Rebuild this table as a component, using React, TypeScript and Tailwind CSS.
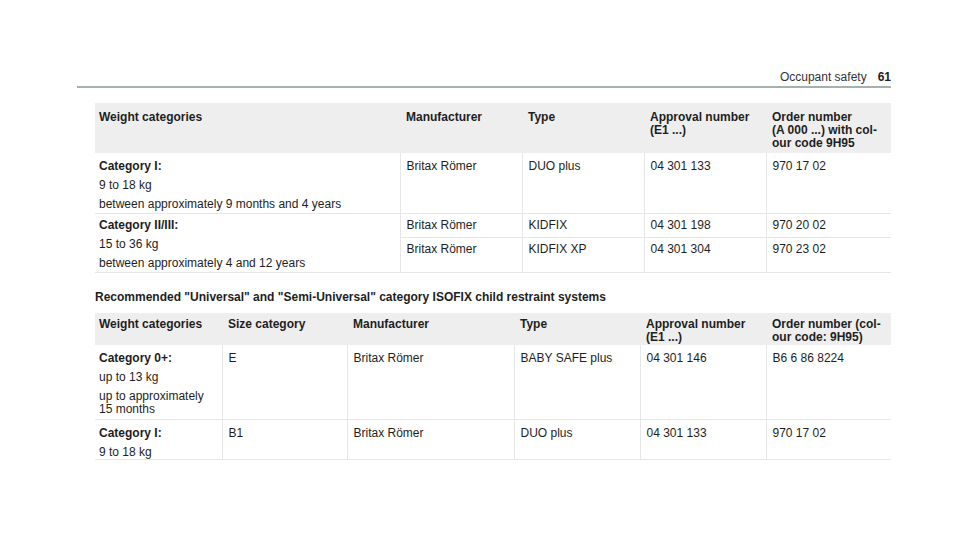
import React from "react";

const font = { fontFamily: '"Liberation Sans", Arial, sans-serif' };

const cell = "px-[6px] pt-[7px] align-top border-b border-l border-[#e6e6e6]";
const cellFirst = "px-[4px] pt-[7px] align-top border-b border-[#e6e6e6]";
const sub = "px-[6px] pt-[5px] align-top border-b border-l border-[#e6e6e6]";
const head = "px-[6px] text-left align-top font-bold";

function Lines({ items }: { items: React.ReactNode[] }) {
  return (
    <div className="flex flex-col gap-[6px]">
      {items.map((t, i) => (
        <div key={i}>{t}</div>
      ))}
    </div>
  );
}

export default function App() {
  return (
    <div className="w-[960px] h-[533px] bg-white text-[#1e1e1e]" style={font}>
      <div className="pl-[77px] pr-[69px] pt-[70px]">
        <div className="flex justify-end items-end gap-[11px] border-b-2 border-[#a3b2ad] pb-[2px] text-[12px] leading-[14px]">
          <span className="text-[#333]">Occupant safety</span>
          <span className="font-bold">61</span>
        </div>

        <div className="ml-[18px] mt-[15px] text-[12px] leading-[13px]">
          <table className="w-[796px] table-fixed border-collapse">
            <colgroup>
              <col className="w-[305px]" />
              <col className="w-[122px]" />
              <col className="w-[122px]" />
              <col className="w-[122px]" />
              <col className="w-[125px]" />
            </colgroup>
            <thead>
              <tr className="h-[50px] bg-[#eeeeee]">
                <th className="px-[4px] pt-[8px] text-left align-top font-bold">Weight categories</th>
                <th className={head + " pt-[8px]"}>Manufacturer</th>
                <th className={head + " pt-[8px]"}>Type</th>
                <th className={head + " pt-[8px]"}>
                  Approval number
                  <br />
                  (E1 ...)
                </th>
                <th className={head + " pt-[8px]"}>
                  Order number
                  <br />
                  (A 000 ...) with col-
                  <br />
                  our code 9H95
                </th>
              </tr>
            </thead>
            <tbody>
              <tr className="h-[60px]">
                <td className={cellFirst}>
                  <Lines items={[<b>Category I:</b>, "9 to 18 kg", "between approximately 9 months and 4 years"]} />
                </td>
                <td className={cell}>Britax Römer</td>
                <td className={cell}>DUO plus</td>
                <td className={cell}>04 301 133</td>
                <td className={cell}>970 17 02</td>
              </tr>
              <tr className="h-[24px]">
                <td rowSpan={2} className="px-[4px] pt-[5px] align-top border-b border-[#e6e6e6]">
                  <Lines items={[<b>Category II/III:</b>, "15 to 36 kg", "between approximately 4 and 12 years"]} />
                </td>
                <td className={sub}>Britax Römer</td>
                <td className={sub}>KIDFIX</td>
                <td className={sub}>04 301 198</td>
                <td className={sub}>970 20 02</td>
              </tr>
              <tr className="h-[35px]">
                <td className={sub}>Britax Römer</td>
                <td className={sub}>KIDFIX XP</td>
                <td className={sub}>04 301 304</td>
                <td className={sub}>970 23 02</td>
              </tr>
            </tbody>
          </table>

          <p className="mt-[18px] font-bold">
            Recommended "Universal" and "Semi-Universal" category ISOFIX child restraint systems
          </p>

          <table className="mt-[9px] w-[796px] table-fixed border-collapse">
            <colgroup>
              <col className="w-[127px]" />
              <col className="w-[125px]" />
              <col className="w-[167px]" />
              <col className="w-[126px]" />
              <col className="w-[126px]" />
              <col className="w-[125px]" />
            </colgroup>
            <thead>
              <tr className="h-[32px] bg-[#eeeeee]">
                <th className="px-[4px] pt-[5px] text-left align-top font-bold">Weight categories</th>
                <th className={head + " pt-[5px]"}>Size category</th>
                <th className={head + " pt-[5px]"}>Manufacturer</th>
                <th className={head + " pt-[5px]"}>Type</th>
                <th className={head + " pt-[5px]"}>
                  Approval number
                  <br />
                  (E1 ...)
                </th>
                <th className={head + " pt-[5px]"}>
                  Order number (col-
                  <br />
                  our code: 9H95)
                </th>
              </tr>
            </thead>
            <tbody>
              <tr className="h-[75px]">
                <td className={cellFirst}>
                  <Lines
                    items={[
                      <b>Category 0+:</b>,
                      "up to 13 kg",
                      <span>
                        up to approximately
                        <br />
                        15 months
                      </span>,
                    ]}
                  />
                </td>
                <td className={cell}>E</td>
                <td className={cell}>Britax Römer</td>
                <td className={cell}>BABY SAFE plus</td>
                <td className={cell}>04 301 146</td>
                <td className={cell}>B6 6 86 8224</td>
              </tr>
              <tr className="h-[40px]">
                <td className={cellFirst}>
                  <Lines items={[<b>Category I:</b>, "9 to 18 kg"]} />
                </td>
                <td className={cell}>B1</td>
                <td className={cell}>Britax Römer</td>
                <td className={cell}>DUO plus</td>
                <td className={cell}>04 301 133</td>
                <td className={cell}>970 17 02</td>
              </tr>
            </tbody>
          </table>
        </div>
      </div>
    </div>
  );
}
